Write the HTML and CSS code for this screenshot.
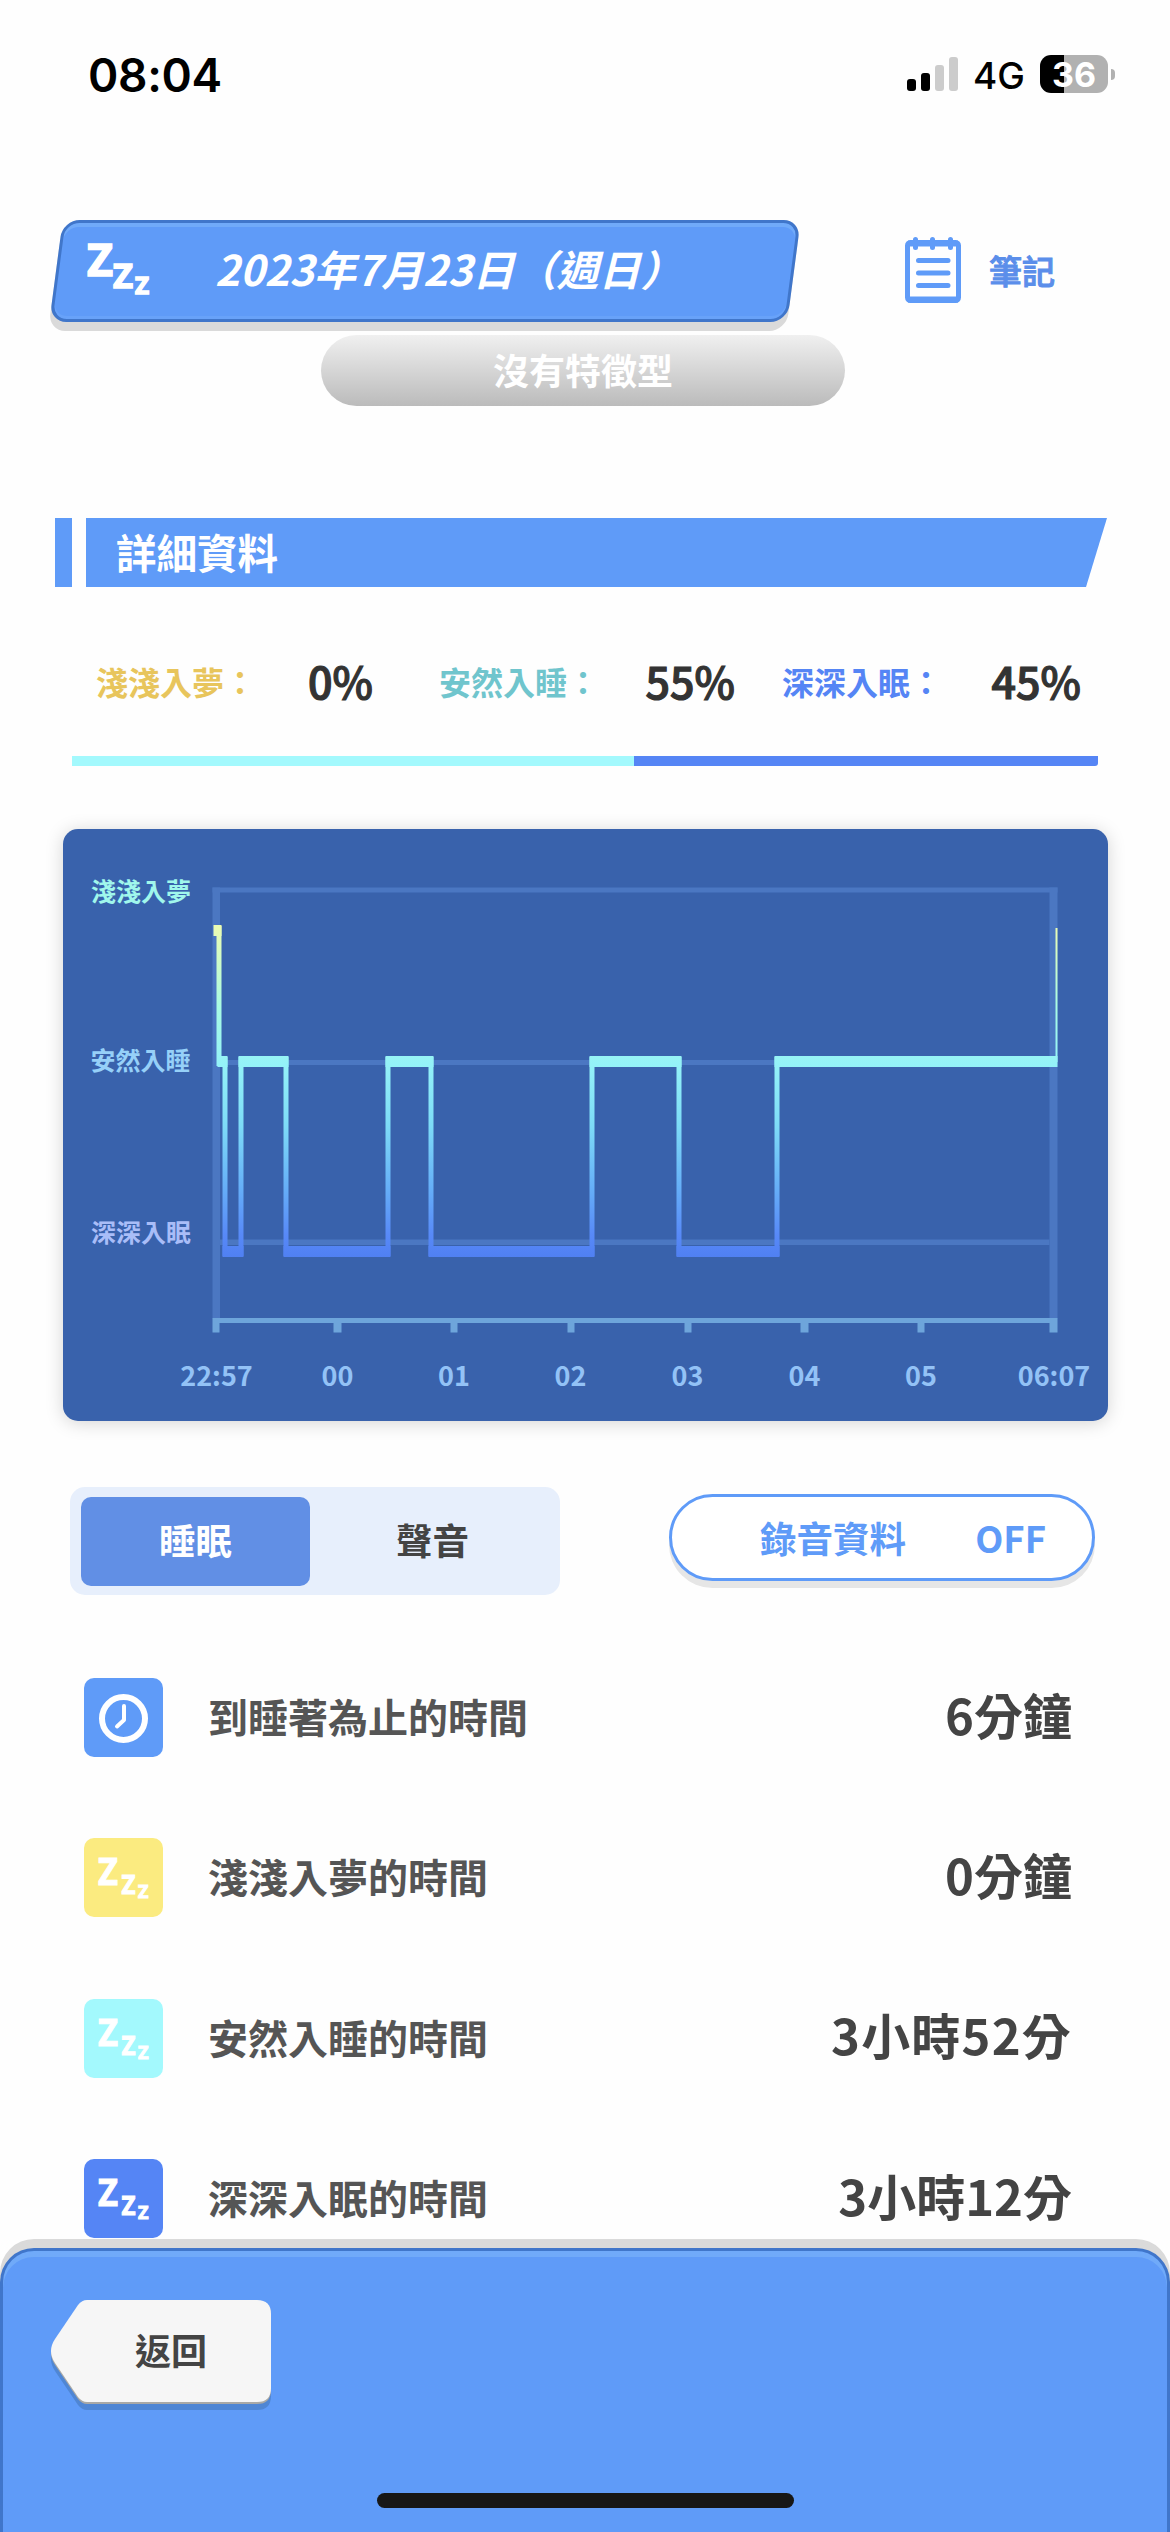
FILE: index.html
```html
<!DOCTYPE html>
<html lang="zh-Hant">
<head>
  <meta charset="UTF-8" />
  <meta name="viewport" content="width=device-width, initial-scale=1.0" />
  <title>睡眠資料</title>
  <link rel="stylesheet" href="styles.css">
</head>
<body>
  <div class="status-bar">
    <span class="time">08:04</span>
    <div class="status-right">
      <svg class="signal" width="51" height="34" viewBox="0 0 51 34">
        <rect x="0" y="22" width="9" height="12" rx="3" />
        <rect x="14" y="16" width="9" height="18" rx="3" />
        <rect x="28" y="8" width="9" height="26" rx="3" fill="#ccc" />
        <rect x="42" y="0" width="9" height="34" rx="3" fill="#ccc" />
      </svg>
      <span class="network">4G</span>
      <div class="battery">36</div>
      <div class="battery-cap"></div>
    </div>
  </div>

  <header class="header">
    <div class="date-banner">
      <div class="date-inner">
        <svg class="banner-zzz" width="70" height="60" viewBox="0 0 70 60">
          <text x="0" y="36" font-size="44" textLength="26" lengthAdjust="spacingAndGlyphs">Z</text>
          <text x="26" y="48" font-size="34" textLength="20" lengthAdjust="spacingAndGlyphs">Z</text>
          <text x="48" y="54" font-size="23" textLength="14" lengthAdjust="spacingAndGlyphs">Z</text>
        </svg>
        <span class="date">2023年7月23日（週日）</span>
      </div>
    </div>
    <div class="note">
      <svg width="56" height="67" viewBox="0 0 56 67" fill="none" stroke="#5f9bf8">
        <rect x="2.5" y="5.5" width="51" height="58" rx="3" stroke-width="5" />
        <path d="M3 6.500h50M3 62.500h50" stroke-width="6" />
        <path d="M10.500 2.500v8M27.500 2.500v8M45.500 2.500v8M13.500 23.500h29.500M13.500 36h29.500M13.500 48.500h29.500" stroke-width="5" stroke-linecap="round" />
      </svg>
      <span>筆記</span>
    </div>
  </header>

  <div class="type-pill">沒有特徵型</div>

  <div class="section-title">
    <i></i>
    <h2>詳細資料</h2>
  </div>

  <div class="stats">
    <div class="stat light"><span>淺淺入夢：</span><b>0%</b></div>
    <div class="stat calm"><span>安然入睡：</span><b>55%</b></div>
    <div class="stat deep"><span>深深入眠：</span><b>45%</b></div>
  </div>
  <div class="ratio">
    <div class="ratio-calm"></div>
    <div class="ratio-deep"></div>
  </div>

  <div class="chart">
    <svg width="1045" height="592" viewBox="62.500 829 1045 592">
      <defs>
        <linearGradient id="depth" gradientUnits="userSpaceOnUse" x1="0" y1="925" x2="0" y2="1257">
          <stop offset="0" stop-color="#ecfcb2" />
          <stop offset="0.25" stop-color="#a8fbe4" />
          <stop offset="0.42" stop-color="#94f2f8" />
          <stop offset="0.6" stop-color="#7edcf7" />
          <stop offset="0.8" stop-color="#65adf8" />
          <stop offset="0.93" stop-color="#588af8" />
          <stop offset="1" stop-color="#5080f2" />
        </linearGradient>
      </defs>
      <!-- grid -->
      <g fill="#4b77c2">
        <rect x="212" y="887.500" width="845" height="5" />
        <rect x="212" y="887.500" width="7.500" height="431" />
        <rect x="1049" y="887.500" width="8" height="431" />
        <rect x="219" y="1060" width="830" height="5" />
        <rect x="219" y="1239.500" width="830" height="5.500" />
      </g>
      <!-- axis -->
      <path fill="#6ea5db" d="M212 1318h845v14.500h-8v-9.500h-125v9.500h-7v-9.500h-109v9.500h-8v-9.500h-109v9.500h-7v-9.500h-110v9.500h-7v-9.500h-110v9.500h-7v-9.500h-109v9.500h-8v-9.500h-114v9.500h-7z" />
      <!-- sleep depth -->
      <g fill="none" stroke="url(#depth)">
        <path stroke-width="5" d="M218.500 926v140M224.500 1057v199M240.500 1057v199M285.500 1057v199M387.500 1057v199M430.500 1057v199M591.500 1057v199M678.500 1057v199M776.500 1057v199" />
        <path stroke-width="2" d="M1056 928v134" />
        <path stroke-width="11" d="M213 930.500h8M217 1061.500h10M238 1061.500h50M385 1061.500h48M589 1061.500h92M774 1061.500h283M222 1251.500h21M283 1251.500h107M428 1251.500h166M676 1251.500h103" />
      </g>
      <g class="levels">
        <text x="90.500" y="900.500" fill="#a0f7ec">淺淺入夢</text>
        <text x="90" y="1069.500" fill="#96d0f8">安然入睡</text>
        <text x="90.500" y="1241.500" fill="#a9bdf8">深深入眠</text>
      </g>
      <g class="hours">
        <text x="216" y="1386">22:57</text>
        <text x="337" y="1386">00</text>
        <text x="453.500" y="1386">01</text>
        <text x="570" y="1386">02</text>
        <text x="687" y="1386">03</text>
        <text x="804" y="1386">04</text>
        <text x="920.500" y="1386">05</text>
        <text x="1053.500" y="1386">06:07</text>
      </g>
    </svg>
  </div>

  <div class="controls">
    <div class="tabs">
      <div class="tab active">睡眠</div>
      <div class="tab">聲音</div>
    </div>
    <div class="record"><span>錄音資料</span><span>OFF</span></div>
  </div>

  <ul class="list">
    <li>
      <svg class="icon clock" viewBox="0 0 79 79">
        <circle cx="39.500" cy="40.500" r="21.500" stroke-width="6" />
        <path d="M40 28v14l-7 6.500" stroke-width="4" stroke-linecap="round" stroke-linejoin="round" />
      </svg>
      <span class="name">到睡著為止的時間</span>
      <span class="value">6分鐘</span>
    </li>
    <li>
      <svg class="icon bg-light" viewBox="0 0 79 79">
        <text x="14" y="47" font-size="37" textLength="20" lengthAdjust="spacingAndGlyphs">Z</text>
        <text x="37.500" y="55.500" font-size="26" textLength="14" lengthAdjust="spacingAndGlyphs">Z</text>
        <text x="54" y="60" font-size="18" textLength="10.500" lengthAdjust="spacingAndGlyphs">Z</text>
      </svg>
      <span class="name">淺淺入夢的時間</span>
      <span class="value">0分鐘</span>
    </li>
    <li>
      <svg class="icon bg-calm" viewBox="0 0 79 79">
        <text x="14" y="47" font-size="37" textLength="20" lengthAdjust="spacingAndGlyphs">Z</text>
        <text x="37.500" y="55.500" font-size="26" textLength="14" lengthAdjust="spacingAndGlyphs">Z</text>
        <text x="54" y="60" font-size="18" textLength="10.500" lengthAdjust="spacingAndGlyphs">Z</text>
      </svg>
      <span class="name">安然入睡的時間</span>
      <span class="value wide">3小時52分</span>
    </li>
    <li>
      <svg class="icon bg-deep" viewBox="0 0 79 79">
        <text x="14" y="47" font-size="37" textLength="20" lengthAdjust="spacingAndGlyphs">Z</text>
        <text x="37.500" y="55.500" font-size="26" textLength="14" lengthAdjust="spacingAndGlyphs">Z</text>
        <text x="54" y="60" font-size="18" textLength="10.500" lengthAdjust="spacingAndGlyphs">Z</text>
      </svg>
      <span class="name">深深入眠的時間</span>
      <span class="value">3小時12分</span>
    </li>
  </ul>

  <footer class="footer">
    <div class="back">
      <svg width="220" height="112" viewBox="0 0 220 112">
        <path transform="translate(0 7)" fill="#4f86d4" d="M36 0H206Q220 0 220 14V89Q220 103 206 103H36Q31 103 27 98L4 64Q-4 52 4 40L27 5Q31 0 36 0Z" />
        <path transform="translate(0 1)" fill="#a9a9a6" d="M36 0H206Q220 0 220 14V89Q220 103 206 103H36Q31 103 27 98L4 64Q-4 52 4 40L27 5Q31 0 36 0Z" />
        <path fill="#f6f6f6" d="M36 0H206Q220 0 220 14V88Q220 102 206 102H36Q31 102 27 97L4 63Q-4 51 4 39L27 5Q31 0 36 0Z" />
      </svg>
      <span>返回</span>
    </div>
    <div class="home-bar"></div>
  </footer>
</body>
</html>
```
FILE: styles.css
```css
* {
  margin: 0;
  padding: 0;
  box-sizing: border-box;
}
body {
  width: 1170px;
  height: 2532px;
  overflow: hidden;
  background: #fefefe;
  font-family: "Noto Sans CJK TC", sans-serif;
  font-weight: bold;
  color: #444;
  display: flex;
  flex-direction: column;
}
svg {
  display: block;
}

/* Status bar */
.status-bar {
  height: 220px;
  padding: 50px 55px 0 88px;
  display: flex;
  justify-content: space-between;
  align-items: flex-start;
  font-family: Inter, sans-serif;
  color: #000;
}
.time {
  font-size: 46px;
  line-height: 50px;
  font-weight: 600;
  letter-spacing: -0.300px;
}
.status-right {
  display: flex;
  align-items: center;
  height: 48px;
}
.network {
  margin: 3px 15px 0 15px;
  width: 52px;
  font-size: 37px;
  line-height: 40px;
  font-weight: 500;
  text-align: center;
}
.battery {
  width: 68px;
  height: 38px;
  border-radius: 11px;
  background: linear-gradient(to right, #000 24px, #b1b1b1 24px);
  color: #fff;
  font-size: 34px;
  line-height: 39px;
  font-weight: 700;
  text-align: center;
}
.battery-cap {
  width: 4px;
  height: 11px;
  margin-left: 3px;
  border-radius: 0 5px 5px 0;
  background: #b1b1b1;
}

/* Header */
.header {
  height: 115px;
  display: flex;
  padding-left: 56px;
}
.date-banner {
  width: 738px;
  height: 102px;
  border: 3px solid #4076ca;
  border-radius: 17px;
  background: #5f9bf8;
  box-shadow: 0 9px 0 #dadada, inset 0 4px 0 #70aaf9, inset 0 -3px 0 #68a2f9;
  transform: skewX(-7.5deg);
}
.date-inner {
  display: flex;
  height: 96px;
  transform: skewX(7.5deg);
}
.banner-zzz {
  margin: 17px 0 0 28px;
  fill: #fff;
  stroke: #fff;
  stroke-width: 1.500px;
  font-family: "Noto Sans", sans-serif;
}
.date {
  margin-left: 58px;
  color: #fff;
  font-size: 42px;
  line-height: 89px;
  font-style: italic;
  white-space: nowrap;
}
.note {
  display: flex;
  margin: 17px 0 0 111px;
  height: 67px;
  gap: 28px;
  color: #5b8eea;
  font-size: 33px;
  line-height: 67px;
  font-weight: 500;
  -webkit-text-stroke: 1px #5b8eea;
}
.type-pill {
  width: 524px;
  height: 71px;
  margin-left: 321px;
  border-radius: 36px;
  background: linear-gradient(#f0f0f0, #bbb);
  color: #fff;
  font-size: 36px;
  line-height: 69px;
  text-align: center;
}

/* Details */
.section-title {
  display: flex;
  gap: 14px;
  margin: 112px 0 0 55px;
  height: 69px;
}
.section-title i {
  width: 17px;
  background: #5f9bf8;
}
.section-title h2 {
  width: 1021px;
  padding-left: 30px;
  background: #5f9bf8;
  clip-path: polygon(0 0, 100% 0, 1000px 100%, 0 100%);
  color: #fff;
  font-size: 40.500px;
  line-height: 67px;
}
.stats {
  display: grid;
  grid-template-columns: 343px 343px 304px;
  height: 100px;
  margin: 44px 0 0 96px;
}
.stat {
  display: flex;
  align-items: center;
  justify-content: space-between;
  font-size: 32px;
}
.stat span {
  white-space: nowrap;
}
.stat b {
  margin-bottom: 3px;
  color: #333;
  font-size: 43px;
  font-weight: 500;
  -webkit-text-stroke: 1.200px #333;
}
.stat.light {
  color: #e8c55c;
  padding-right: 66px;
}
.stat.calm {
  color: #70c5cd;
  padding-right: 47px;
}
.stat.deep {
  color: #5585f5;
  padding-right: 5px;
}
.ratio {
  display: flex;
  width: 1026px;
  height: 10px;
  margin: 25px 0 0 72px;
}
.ratio-calm {
  width: 562px;
  background: #a3f9fd;
}
.ratio-deep {
  flex: 1;
  border-radius: 0 0 3px 0;
  background: #5585f5;
}

/* Chart */
.chart {
  width: 1045px;
  height: 592px;
  margin: 63px 0 0 62.500px;
  border-radius: 15px;
  background: #3962ac;
  box-shadow: 0 2px 18px rgba(0, 0, 0, 0.17);
}
.levels {
  font-size: 25px;
}
.hours {
  font-size: 27px;
  fill: #93c2f6;
  text-anchor: middle;
}

/* Tabs and recording switch */
.controls {
  display: flex;
  justify-content: space-between;
  margin: 66px 75px 0 70px;
}
.tabs {
  display: flex;
  width: 490px;
  height: 108px;
  padding: 10px 11px;
  border-radius: 15px;
  background: #e7effc;
}
.tab {
  flex: none;
  width: 239px;
  height: 89px;
  border-radius: 10px;
  font-size: 36.500px;
  line-height: 86px;
  text-align: center;
}
.tab.active {
  width: 229px;
  background: #618fe5;
  color: #fff;
}
.tab:last-child {
  padding-left: 6px;
}
.record {
  display: flex;
  justify-content: space-between;
  width: 426px;
  height: 87px;
  margin-top: 7px;
  padding: 0 46px 0 88px;
  border: 3px solid #5f9bf8;
  border-radius: 44px;
  background: #fff;
  box-shadow: 0 7px 0 #e6e6e6;
  color: #5f9bf8;
  font-size: 36.500px;
  line-height: 82px;
}

/* List */
.list {
  list-style: none;
  height: 644px;
  padding: 83px 98px 0 84px;
}
.list li {
  display: flex;
  align-items: center;
  height: 79px;
  margin-bottom: 81.400px;
}
.icon {
  width: 79px;
  height: 79px;
  border-radius: 10px;
  fill: #fff;
  stroke: #fff;
  font-family: "Noto Sans", sans-serif;
}
.clock {
  background: #5f9bf8;
  fill: none;
}
.bg-light {
  background: #fbeb80;
}
.bg-calm {
  background: #a3f9fd;
}
.bg-deep {
  background: #5585f5;
}
.name {
  flex: 1;
  margin: 0 0 3px 45px;
  color: #555;
  font-size: 40px;
}
.value {
  font-size: 49px;
  line-height: 75px;
  margin-bottom: 9px;
}
.value.wide {
  letter-spacing: 1.200px;
}

/* Footer */
.footer {
  flex: 1;
  margin-top: 9px;
  border: 3px solid #4076ca;
  border-bottom: none;
  border-radius: 34px 34px 0 0;
  background: #5f9bf8;
  box-shadow: 0 -9px 0 #dadada, inset 0 6px 0 #70aaf9;
}
.back {
  display: grid;
  width: 220px;
  margin: 49px 0 0 48px;
}
.back svg,
.back span {
  grid-area: 1 / 1;
}
.back span {
  padding-left: 84px;
  font-size: 36px;
  line-height: 98px;
}
.home-bar {
  width: 417px;
  height: 15px;
  margin: 81px auto 0;
  border-radius: 8px;
  background: #171717;
}
```
